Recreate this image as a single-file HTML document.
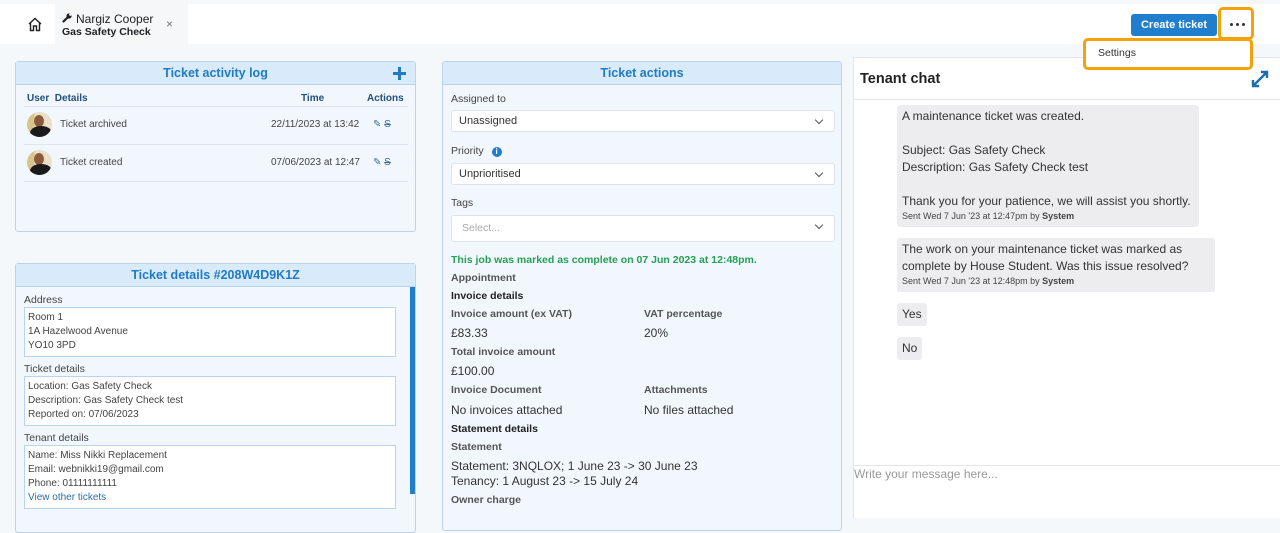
<!DOCTYPE html>
<html><head><meta charset="utf-8">
<style>
*{box-sizing:border-box;margin:0;padding:0}
body{width:1280px;height:518px;overflow:hidden;background:#f5f8fa;font-family:"Liberation Sans",sans-serif;color:#333;position:relative;font-size:11px}
.abs{position:absolute}
.top{left:0;top:4px;width:1280px;height:40px;background:#fff}
.panel{position:absolute;background:#f1f7fd;border:1px solid #b9d4ee;border-radius:3px}
.ph{height:23px;background:#d9ebfa;border-bottom:1px solid #b9d4ee;text-align:center;color:#1e7bc4;font-weight:bold;font-size:12.5px;line-height:22px}
.lbl{font-size:10.5px;color:#444}
.box{position:absolute;left:8px;width:372px;background:#fff;border:1px solid #b9d4ee;padding:3px 3px;font-size:10px;line-height:14px;color:#444}
.sel{position:absolute;left:8px;width:384px;height:22px;background:#fff;border:1px solid #dde3ea;border-radius:3px;font-size:11px;line-height:20px;padding-left:7px;color:#333}
.sel:after{content:"";position:absolute;right:12px;top:6px;width:5px;height:5px;border-right:1.2px solid #555;border-bottom:1.2px solid #555;transform:rotate(45deg)}
.b{font-weight:bold;font-size:10.5px;color:#555}
.v{font-size:12px;color:#333}
.bub{position:absolute;left:897px;background:#ededef;border-radius:3px;padding:3px 5px;font-size:12px;line-height:17px;color:#333}
.meta{font-size:9px;line-height:12px;color:#444}
.av{position:absolute;width:25px;height:25px;border-radius:50%;overflow:hidden;background:linear-gradient(90deg,#d8c48a 0 30%,#e8e0c8 30% 100%)}
.av:before{content:"";position:absolute;left:7px;top:3px;width:10px;height:12px;border-radius:50%;background:#8a5a3a}
.av:after{content:"";position:absolute;left:3px;top:14px;width:22px;height:14px;border-radius:50% 50% 0 0;background:#1a1a1a}
</style></head><body>
<div class="abs top"></div>
<div class="abs" style="left:15px;top:4px;width:40px;height:40px;background:#fff"></div>
<svg class="abs" style="left:27px;top:17px" width="16" height="15" viewBox="0 0 16 15"><path d="M2 7 L8 1.5 L14 7 M3.5 6 V13.5 H6.5 V9 H9.5 V13.5 H12.5 V6" fill="none" stroke="#222" stroke-width="1.4"/></svg>
<div class="abs" style="left:55px;top:4px;width:133px;height:40px;background:#f5f7f9"></div>
<svg class="abs" style="left:62px;top:13px" width="10" height="10" viewBox="0 0 10 10"><path d="M1.5 8.5 L5 5" stroke="#222" stroke-width="2.2" stroke-linecap="round"/><circle cx="7" cy="3" r="2.6" fill="#222"/><circle cx="8.3" cy="1.7" r="1.2" fill="#f5f7f9"/></svg>
<div class="abs" style="left:76px;top:12px;font-size:12px;color:#222">Nargiz Cooper</div>
<div class="abs" style="left:62px;top:26px;font-size:10.5px;font-weight:bold;color:#222">Gas Safety Check</div>
<div class="abs" style="left:166px;top:17px;font-size:12px;color:#777">×</div>

<!-- ticket details -->
<div class="panel" style="left:15px;top:263px;width:401px;height:270px">
<div class="ph">Ticket details #208W4D9K1Z</div>
<div class="abs" style="right:0;top:23px;width:5px;height:207px;background:#1f7fcc"></div>
<div class="abs lbl" style="left:8px;top:30px">Address</div>
<div class="box" style="top:43px;height:50px">Room 1<br>1A Hazelwood Avenue<br>YO10 3PD</div>
<div class="abs lbl" style="left:8px;top:99px">Ticket details</div>
<div class="box" style="top:112px;height:50px">Location: Gas Safety Check<br>Description: Gas Safety Check test<br>Reported on: 07/06/2023</div>
<div class="abs lbl" style="left:8px;top:168px">Tenant details</div>
<div class="box" style="top:181px;height:64px">Name: Miss Nikki Replacement<br>Email: webnikki19@gmail.com<br>Phone: 01111111111<br><span style="color:#2c6ea8">View other tickets</span></div>
</div>

<!-- activity log -->
<div class="panel" style="left:15px;top:61px;width:401px;height:171px">
<div class="ph">Ticket activity log</div>
<div class="abs" style="right:9px;top:5px;width:13px;height:3px;background:#1e7bc4;top:10px"></div>
<div class="abs" style="right:14px;top:5px;width:3px;height:13px;background:#1e7bc4"></div>
<div class="abs" style="left:11px;top:31px;font-weight:bold;font-size:10px;color:#22507a">User&nbsp; Details</div>
<div class="abs" style="left:285px;top:31px;font-weight:bold;font-size:10px;color:#22507a">Time</div>
<div class="abs" style="left:351px;top:31px;font-weight:bold;font-size:10px;color:#22507a">Actions</div>
<div class="abs" style="left:8px;top:44px;width:384px;border-top:1px solid #dde6ee"></div>
<div class="av" style="left:11px;top:50px"></div>
<div class="abs" style="left:44px;top:57px;font-size:10px;color:#444">Ticket archived</div>
<div class="abs" style="left:255px;top:57px;font-size:10px;color:#444">22/11/2023 at 13:42</div>
<div class="abs" style="left:357px;top:57px;font-size:10px;color:#3a6e9a">&#x270E; <s>S</s></div>
<div class="abs" style="left:8px;top:82px;width:384px;border-top:1px solid #dde6ee"></div>
<div class="av" style="left:11px;top:88px"></div>
<div class="abs" style="left:44px;top:95px;font-size:10px;color:#444">Ticket created</div>
<div class="abs" style="left:255px;top:95px;font-size:10px;color:#444">07/06/2023 at 12:47</div>
<div class="abs" style="left:357px;top:95px;font-size:10px;color:#3a6e9a">&#x270E; <s>S</s></div>
<div class="abs" style="left:8px;top:119px;width:384px;border-top:1px solid #dde6ee"></div>
</div>

<!-- ticket actions -->
<div class="panel" style="left:442px;top:61px;width:400px;height:470px">
<div class="ph">Ticket actions</div>
<div class="abs lbl" style="left:8px;top:31px">Assigned to</div>
<div class="sel" style="top:48px">Unassigned</div>
<div class="abs lbl" style="left:8px;top:83px">Priority <span style="display:inline-block;width:10px;height:10px;border-radius:50%;background:#1f7fcc;color:#fff;font-size:8px;text-align:center;line-height:10px;font-weight:bold;margin-left:5px">i</span></div>
<div class="sel" style="top:101px">Unprioritised</div>
<div class="abs lbl" style="left:8px;top:135px">Tags</div>
<div class="sel" style="top:153px;height:27px;line-height:25px;color:#aaa;font-size:10.5px;padding-left:10px">Select...</div>
<div class="abs" style="left:8px;top:192px;font-size:10.5px;font-weight:bold;color:#25a055">This job was marked as complete on 07 Jun 2023 at 12:48pm.</div>
<div class="abs b" style="left:8px;top:210px">Appointment</div>
<div class="abs b" style="left:8px;top:228px;color:#222">Invoice details</div>
<div class="abs b" style="left:8px;top:246px">Invoice amount (ex VAT)</div>
<div class="abs b" style="left:201px;top:246px">VAT percentage</div>
<div class="abs v" style="left:8px;top:264px">£83.33</div>
<div class="abs v" style="left:201px;top:264px">20%</div>
<div class="abs b" style="left:8px;top:284px">Total invoice amount</div>
<div class="abs v" style="left:8px;top:302px">£100.00</div>
<div class="abs b" style="left:8px;top:322px">Invoice Document</div>
<div class="abs b" style="left:201px;top:322px">Attachments</div>
<div class="abs v" style="left:8px;top:341px">No invoices attached</div>
<div class="abs v" style="left:201px;top:341px">No files attached</div>
<div class="abs b" style="left:8px;top:361px;color:#222">Statement details</div>
<div class="abs b" style="left:8px;top:379px">Statement</div>
<div class="abs v" style="left:8px;top:397px;line-height:15px">Statement: 3NQLOX; 1 June 23 -&gt; 30 June 23<br>Tenancy: 1 August 23 -&gt; 15 July 24</div>
<div class="abs b" style="left:8px;top:432px">Owner charge</div>
</div>

<!-- tenant chat -->
<div class="abs" style="left:853px;top:57px;width:427px;height:461px;background:#fff;border-left:1px solid #e3e6ea;border-top:1px solid #e3e6ea"></div>
<div class="abs" style="left:860px;top:71px;font-size:14.5px;font-weight:bold;color:#222">Tenant chat</div>
<svg class="abs" style="left:1250px;top:69px" width="20" height="20" viewBox="0 0 20 20"><path d="M3 17 L17 3 M11 3 H17 V9 M3 11 V17 H9" fill="none" stroke="#1f6fb0" stroke-width="2.4"/></svg>
<div class="abs" style="left:854px;top:99px;width:426px;border-top:1px solid #e3e6ea"></div>
<div class="bub" style="top:105px;width:302px;height:122px">A maintenance ticket was created.<br><br>Subject: Gas Safety Check<br>Description: Gas Safety Check test<br><br>Thank you for your patience, we will assist you shortly.<div class="meta">Sent Wed 7 Jun '23 at 12:47pm by <b>System</b></div></div>
<div class="bub" style="top:238px;width:318px;height:54px">The work on your maintenance ticket was marked as complete by House Student. Was this issue resolved?<div class="meta">Sent Wed 7 Jun '23 at 12:48pm by <b>System</b></div></div>
<div class="bub" style="top:303px;height:23px">Yes</div>
<div class="bub" style="top:337px;height:23px">No</div>
<div class="abs" style="left:854px;top:465px;width:426px;border-top:1px solid #e3e6ea"></div>
<div class="abs" style="left:854px;top:467px;font-size:12px;color:#999">Write your message here...</div>

<!-- top right -->
<div class="abs" style="left:1131px;top:14px;width:86px;height:22px;background:#1f7fcc;border-radius:3px;color:#fff;font-weight:bold;font-size:11px;text-align:center;line-height:22px">Create ticket</div>
<div class="abs" style="left:1083px;top:38px;width:170px;height:32px;background:#fff;border:3px solid #f5a20a;border-radius:5px;font-size:10.5px;padding:6px 12px;color:#333;z-index:5">Settings</div>
<div class="abs" style="left:1218px;top:7px;width:36px;height:33px;border:3px solid #f5a20a;border-radius:5px;background:#fff;z-index:6">
<div class="abs" style="left:9px;top:13px;width:3px;height:3px;border-radius:50%;background:#333"></div>
<div class="abs" style="left:15px;top:13px;width:3px;height:3px;border-radius:50%;background:#333"></div>
<div class="abs" style="left:21px;top:13px;width:3px;height:3px;border-radius:50%;background:#333"></div>
</div>
</body></html>
